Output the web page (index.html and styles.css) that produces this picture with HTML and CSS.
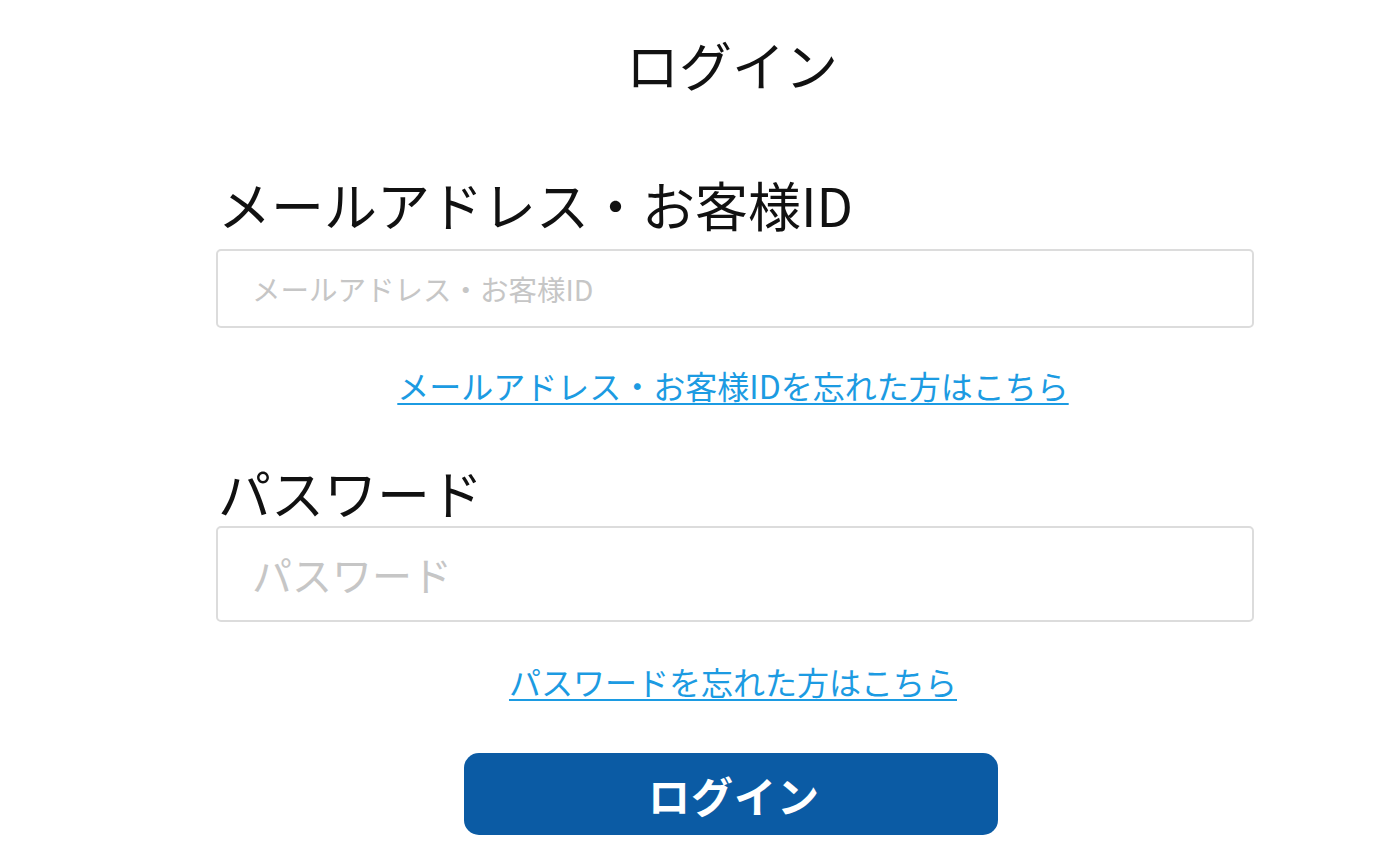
FILE: index.html
```html
<!DOCTYPE html>
<html lang="ja">
<head>
<meta charset="utf-8">
<title>ログイン</title>
<link rel="stylesheet" href="styles.css">
</head>
<body>
<main class="page">
  <h1 class="title">ログイン</h1>
  <form class="form">
    <label class="label label-id" for="uid">メールアドレス・お客様ID</label>
    <input class="field field-id" id="uid" type="text" placeholder="メールアドレス・お客様ID">
    <a class="link link-id" href="#">メールアドレス・お客様IDを忘れた方はこちら</a>
    <label class="label label-pw" for="pw">パスワード</label>
    <input class="field field-pw" id="pw" type="password" placeholder="パスワード">
    <a class="link link-pw" href="#">パスワードを忘れた方はこちら</a>
    <button class="btn" type="button">ログイン</button>
  </form>
</main>
</body>
</html>
```
FILE: styles.css
```css
html, body {
  margin: 0;
  padding: 0;
  background: #ffffff;
}
body {
  font-family: "Noto Sans CJK JP", "Noto Sans", sans-serif;
  color: #111111;
}
.page {
  width: 1038px;
  margin-left: 216px;
  display: flex;
  flex-direction: column;
}
.title {
  margin: 34px 0 0;
  padding-right: 6px;
  font-size: 53px;
  line-height: 60px;
  font-weight: 400;
  text-align: center;
}
.form {
  display: flex;
  flex-direction: column;
  align-items: stretch;
}
.label {
  display: block;
  font-size: 53px;
  line-height: 64px;
  padding-left: 2px;
}
.label-id { margin-top: 78px; }
.label-pw { margin-top: 55px; }
.field {
  box-sizing: border-box;
  width: 100%;
  border: 2px solid #dcdcdc;
  border-radius: 5px;
  padding: 0 0 0 34px;
  font-family: "Noto Sans CJK JP", "Noto Sans", sans-serif;
  background: #fff;
  outline: none;
}
.field::placeholder { color: #c6c6c6; }
.field-id {
  margin-top: 13px;
  height: 79px;
  font-size: 28.5px;
}
.field-pw {
  margin-top: 2px;
  height: 96px;
  font-size: 40px;
}
.link {
  align-self: center;
  font-size: 32px;
  line-height: 40px;
  color: #1c9be2;
  text-decoration: underline;
  text-underline-offset: 4px;
  text-decoration-thickness: 2px;
}
.link-id { margin-top: 37px; margin-right: 4px; }
.link-pw { margin-top: 39px; margin-right: 4px; }
.btn {
  align-self: center;
  margin-top: 52px;
  margin-left: -8px;
  width: 534px;
  height: 82px;
  border: none;
  border-radius: 15px;
  background: #0b5ba4;
  color: #ffffff;
  font-family: "Noto Sans CJK JP", "Noto Sans", sans-serif;
  font-size: 42px;
  font-weight: 700;
  letter-spacing: 1px;
  padding: 0 0 0 6px;
}
```
